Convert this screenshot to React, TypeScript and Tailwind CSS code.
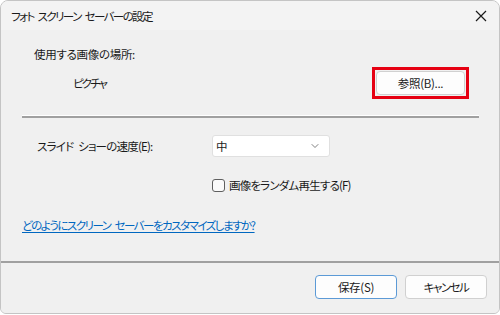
import { ChevronDown } from "lucide-react";

const font = { fontFamily: '"Noto Sans CJK JP", "Noto Sans", sans-serif' };

const App = () => {
  return (
    <div
      className="w-[500px] h-[315px] bg-white text-[11.5px] text-[#1a1a1a] tracking-[-0.3px] [word-spacing:3px] [font-feature-settings:'palt']"
      style={font}
    >
      <div className="w-[500px] h-[314px] flex flex-col border border-[#c4c4c4] rounded-t-[8px] rounded-b-[6px] overflow-hidden bg-[#f0f0f0]">
        {/* Title bar */}
        <div className="h-[29px] flex items-center justify-between pl-[10px] pr-[12px] bg-[#f3f3f3]">
          <span className="leading-[16px] tracking-[-1.6px]">フォト スクリーン セーバーの設定</span>
          <svg width="12" height="12" viewBox="0 0 12 12" className="mt-[1px]">
            <path d="M1 1 L11 11 M11 1 L1 11" stroke="#1a1a1a" strokeWidth="1.2" fill="none" />
          </svg>
        </div>

        {/* Body */}
        <div className="flex-1 flex flex-col px-[21px]">
          <div className="mt-[16px] pl-[12px] leading-[16px]">使用する画像の場所:</div>

          <div className="mt-[5px] flex items-center justify-between pr-[9px]">
            <span className="pl-[51px] leading-[16px] tracking-[-2px]">ピクチャ</span>
            <div className="border-[3px] border-[#e60012] p-[1px]">
              <button className="w-[89px] h-[24px] bg-[#fdfdfd] border border-[#d0d0d0] rounded-[4px] leading-[16px]">
                参照(B)...
              </button>
            </div>
          </div>

          <div className="mt-[16px] h-[3px] w-[457px] bg-[#a0a0a0] border-t border-white" />

          <div className="mt-[17px] flex items-center">
            <span className="w-[190px] pl-[15px] leading-[16px] tracking-[-0.8px]">スライド ショーの速度(E):</span>
            <div className="w-[118px] h-[22px] flex items-center justify-between bg-white border border-[#e0e0e0] rounded-[3px] pl-[3px] pr-[8px]">
              <span className="leading-[16px]">中</span>
              <ChevronDown size={12} strokeWidth={1.5} color="#555" />
            </div>
          </div>

          <div className="mt-[20px] ml-[190px] flex items-center gap-[4px]">
            <div className="w-[13px] h-[13px] border border-[#5f5f5f] rounded-[3px] bg-[#fafafa]" />
            <span className="leading-[16px] tracking-[-0.8px]">画像をランダム再生する(F)</span>
          </div>

          <div className="mt-[24px] leading-[16px]">
            <span className="text-[#0067c0] underline underline-offset-[2px] tracking-[-1.5px]">
              どのようにスクリーン セーバーをカスタマイズしますか?
            </span>
          </div>
        </div>

        {/* Footer */}
        <div className="h-[52px] border-t-2 border-[#a0a0a0] flex items-start justify-end gap-[8px] pt-[12px] pr-[12px] bg-[#f0f0f0]">
          <button className="w-[82px] h-[24px] bg-[#fdfdfd] border border-[#5c9ad6] rounded-[4px] leading-[16px]">
            保存(S)
          </button>
          <button className="w-[82px] h-[24px] bg-[#fdfdfd] border border-[#d0d0d0] rounded-[4px] leading-[16px] tracking-[-1.5px]">
            キャンセル
          </button>
        </div>
      </div>
    </div>
  );
};

export default App;
